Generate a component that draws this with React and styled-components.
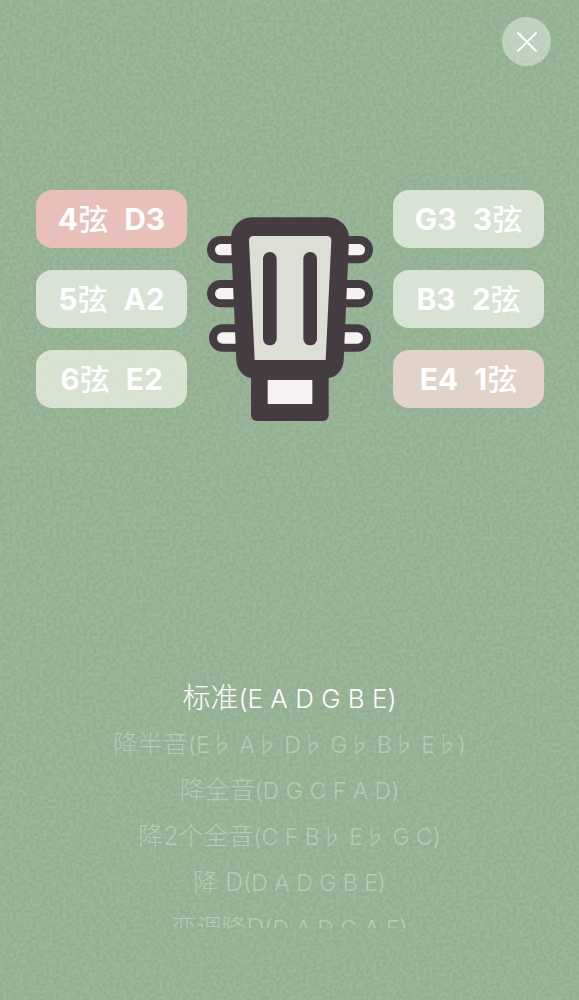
import React, { useState } from "react";
import styled, { createGlobalStyle } from "styled-components";

const GlobalStyle = createGlobalStyle`
  * { box-sizing: border-box; }
  body {
    margin: 0;
    background: #97b395;
    font-family: Inter, "Noto Sans CJK SC", sans-serif;
    color: #fff;
  }
  button {
    font: inherit;
    color: inherit;
    border: 0;
    padding: 0;
    background: none;
    cursor: pointer;
  }
`;

const Page = styled.main`
  position: relative;
  isolation: isolate;
  min-height: 100vh;
  display: flex;
  flex-direction: column;
  overflow: hidden;
`;

const Grain = styled.svg`
  position: absolute;
  inset: 0;
  z-index: -1;
  width: 100%;
  height: 100%;
  pointer-events: none;
`;

const Header = styled.header`
  display: flex;
  justify-content: flex-end;
  padding: 17px 28px 0;
`;

const CloseButton = styled.button`
  width: 49px;
  height: 49px;
  border-radius: 50%;
  background: rgba(255, 255, 255, 0.4);
  display: grid;
  place-items: center;
`;

const Tuner = styled.section`
  display: grid;
  grid-template-columns: 151fr 206fr 151fr;
  padding: 0 35px 0 36px;
  margin-top: 124px;
`;

const Strings = styled.div`
  display: flex;
  flex-direction: column;
  gap: 22px;
`;

const tones = {
  active: "#e9bfba",
  near: "rgba(244, 219, 214, 0.8)",
  cool: "rgba(243, 247, 241, 0.7)",
  warm: "rgba(244, 247, 234, 0.7)",
};

const StringButton = styled.button`
  height: 58px;
  border-radius: 16px;
  display: flex;
  align-items: center;
  justify-content: center;
  gap: 16px;
  background: ${({ $tone }) => tones[$tone]};
  font-size: 30px;
  line-height: 40px;
  font-weight: 700;
`;

const Hanzi = styled.span`
  font-weight: 500;
`;

const Head = styled.div`
  display: flex;
  justify-content: center;
  padding-top: 27px;
`;

const Picker = styled.section`
  display: flex;
  flex-direction: column;
  height: 253px;
  margin-top: 254px;
  overflow: hidden;
`;

const Tuning = styled.button`
  flex: none;
  height: 46px;
  font-size: ${({ $selected }) => ($selected ? 28 : 25)}px;
  line-height: 46px;
  font-weight: 300;
  white-space: pre;
  color: ${({ $selected }) => ($selected ? "#fff" : "rgba(255, 255, 255, 0.32)")};
`;

const Notes = styled.span`
  font-size: ${({ $selected }) => ($selected ? 26 : 23)}px;
`;

const leftStrings = [
  { number: 4, note: "D3", tone: "active" },
  { number: 5, note: "A2", tone: "cool" },
  { number: 6, note: "E2", tone: "warm" },
];

const rightStrings = [
  { number: 3, note: "G3", tone: "cool" },
  { number: 2, note: "B3", tone: "cool" },
  { number: 1, note: "E4", tone: "near" },
];

const tunings = [
  { name: "标准", notes: "(E A D G B E)" },
  { name: "降半音", notes: "(E♭ A♭ D♭ G♭ B♭ E♭)" },
  { name: "降全音", notes: "(D G C F A D)" },
  { name: "降2个全音", notes: "(C F B♭ E♭ G C)" },
  { name: "降 D", notes: "(D A D G B E)" },
  { name: "变调降D", notes: "(D A D G A E)" },
];

function Headstock() {
  const dark = "#443c41";
  const pegs = [
    { x: 51, y: 107 },
    { x: 51, y: 239 },
    { x: 57, y: 372 },
  ];
  const side = pegs.map(({ x, y }) => (
    <g key={y}>
      <rect x={x} y={y} width="140" height="82" rx="41" fill={dark} />
      <rect x={x + 24} y={y + 24} width="100" height="34" rx="17" fill="#f7f2f2" />
    </g>
  ));
  return (
    <svg width="166" height="204" viewBox="51 50 498 612" role="img" aria-label="吉他琴头">
      {side}
      <g transform="translate(600 0) scale(-1 1)">{side}</g>
      <rect x="183" y="500" width="233" height="162" rx="17" fill={dark} />
      <rect x="233" y="539" width="134" height="72" fill="#f7f2f2" />
      <path
        d="M187 51H413Q440 51 458 69Q478 88 477 117L461 480Q460 502 446 517Q432 533 410 533H190Q168 533 154 517Q140 502 139 480L123 117Q122 88 142 69Q160 51 187 51Z"
        fill={dark}
      />
      <path d="M190 107H411Q424 107 424 121L407 479H194L177 121Q177 107 190 107Z" fill="#ddded5" />
      <rect x="219" y="155" width="41" height="280" rx="20" fill={dark} />
      <rect x="340" y="155" width="41" height="280" rx="20" fill={dark} />
    </svg>
  );
}

export default function App() {
  const [selected, setSelected] = useState(0);
  return (
    <>
      <GlobalStyle />
      <Page>
        <Grain aria-hidden="true">
          <filter id="grain" x="0" y="0" width="100%" height="100%" colorInterpolationFilters="sRGB">
            <feTurbulence type="fractalNoise" baseFrequency="0.3" numOctaves="1" seed="4" />
            <feColorMatrix
              values="1 0 0 0 0
                      1 0 0 0 0
                      1 0 0 0 0
                      0 0 0 0 1"
            />
            <feComponentTransfer>
              <feFuncR type="table" tableValues="0.574 0.574 0.579 0.606 0.611 0.611" />
              <feFuncG type="table" tableValues="0.682 0.682 0.686 0.714 0.718 0.718" />
              <feFuncB type="table" tableValues="0.565 0.565 0.569 0.596 0.6 0.6" />
            </feComponentTransfer>
          </filter>
          <rect width="100%" height="100%" filter="url(#grain)" />
        </Grain>
        <Header>
          <CloseButton aria-label="关闭">
            <svg width="20" height="20" viewBox="0 0 20 20" fill="none" stroke="#fff" strokeWidth="2" strokeLinecap="round">
              <path d="M1 1L19 19M19 1L1 19" />
            </svg>
          </CloseButton>
        </Header>
        <Tuner>
          <Strings>
            {leftStrings.map((s) => (
              <StringButton key={s.number} $tone={s.tone}>
                <span>{s.number}<Hanzi>弦</Hanzi></span>
                <span>{s.note}</span>
              </StringButton>
            ))}
          </Strings>
          <Head><Headstock /></Head>
          <Strings>
            {rightStrings.map((s) => (
              <StringButton key={s.number} $tone={s.tone}>
                <span>{s.note}</span>
                <span>{s.number}<Hanzi>弦</Hanzi></span>
              </StringButton>
            ))}
          </Strings>
        </Tuner>
        <Picker aria-label="调弦方式">
          {tunings.map(({ name, notes }, i) => (
            <Tuning key={name} $selected={i === selected} aria-pressed={i === selected} onClick={() => setSelected(i)}>
              {name}<Notes $selected={i === selected}>{notes}</Notes>
            </Tuning>
          ))}
        </Picker>
      </Page>
    </>
  );
}
